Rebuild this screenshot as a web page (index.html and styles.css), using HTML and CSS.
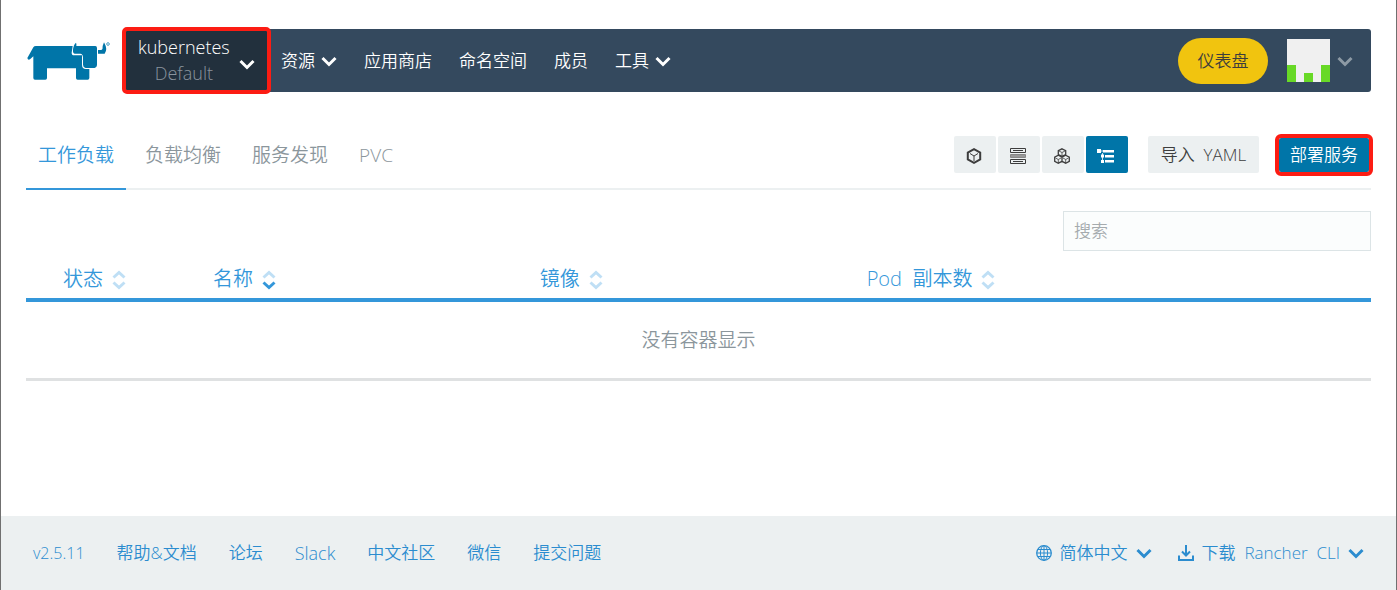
FILE: index.html
```html
<!DOCTYPE html>
<html lang="zh-CN">
<head>
<meta charset="utf-8">
<title>Rancher</title>
<link rel="stylesheet" href="styles.css">
</head>
<body>
<svg class="defs" aria-hidden="true">
  <symbol id="chevron" viewBox="0 0 16 16"><path d="M1.5 5 8 11.500 14.500 5" fill="none" stroke="currentColor" stroke-width="3"/></symbol>
  <symbol id="sort" viewBox="0 0 14 20"><path class="sort-up" d="M1.500 7.500 7 2.500 12.500 7.500"/><path class="sort-down" d="M1.500 12.500 7 17.500 12.500 12.500"/></symbol>
</svg>
<div class="page">
  <header class="header">
    <a class="logo" href="#" aria-label="Rancher">
      <svg viewBox="18 30 255 123">
        <path d="M22 84 40 52Q42 48 48 48H158L155 68Q155 76 162 76H186V104Q186 117 198 117H208V144Q208 149 203 149H173Q168 149 168 144V115H81V144Q81 149 76 149H45Q40 149 40 144V79L30 88Q24 92 22 84Z"/>
        <path d="M168 38Q170 42 169 48H226Q231 48 231 54V104Q231 114 218 114H197Q189 112 189 104V82Q188 71 181 71H165Q158 71 159 60Q160 45 168 38Z"/>
        <path d="M252 37Q264 58 254 71H234V60H244Q249 58 248 48Z"/>
        <circle cx="264" cy="42" r="4" fill="none" stroke="#0075a8" stroke-width="2"/>
      </svg>
    </a>
    <div class="bar">
      <button class="project" type="button">
        <span class="project-names"><span>kubernetes</span><span class="sub">Default</span></span>
        <svg class="icon"><use href="#chevron"/></svg>
      </button>
      <nav class="nav">
        <a href="#">资源<svg class="icon"><use href="#chevron"/></svg></a>
        <a href="#">应用商店</a>
        <a href="#">命名空间</a>
        <a href="#">成员</a>
        <a href="#">工具<svg class="icon"><use href="#chevron"/></svg></a>
      </nav>
      <button class="dashboard" type="button">仪表盘</button>
      <button class="user" type="button" aria-label="用户">
        <svg class="avatar" viewBox="0 0 43 43"><path fill="#f0f0f0" d="M0 0h43v43H0z"/><path fill="#68d926" d="M0 26h9v17H0zM17 34h9v9h-9zM34 26h9v17h-9z"/></svg>
        <svg class="icon"><use href="#chevron"/></svg>
      </button>
    </div>
  </header>

  <main class="main">
    <div class="toolbar">
      <nav class="tabs">
        <a class="active" href="#">工作负载</a>
        <a href="#">负载均衡</a>
        <a href="#">服务发现</a>
        <a href="#">PVC</a>
      </nav>
      <div class="actions">
        <div class="views">
          <button class="btn view" type="button" aria-label="容器"><svg class="icon" viewBox="0 0 16 16" fill="none" stroke="currentColor"><path stroke-width="2" d="M8 1.200 14.200 4.500V11.500L8 14.800 1.800 11.500V4.500Z"/><path d="M4 5.500 8 8 12 5.500M8 8V13"/></svg></button>
          <button class="btn view" type="button" aria-label="主机"><svg class="icon" viewBox="0 0 16 16" fill="none" stroke="currentColor"><path fill="#999" stroke="#888" d="M.5 6.500h15v3H.5z"/><path d="M.5.500h15v4H.5zM.5 11.500h15v4H.5zM3 2.500h10M3 13.500h10"/></svg></button>
          <button class="btn view" type="button" aria-label="分组"><svg class="icon" viewBox="0 0 16 16" fill="none" stroke="currentColor" stroke-width="1.300"><path d="M8 .8 11.700 2.700V6.600L8 8.400 4.300 6.600V2.700ZM4.300 7.200 8 9.200V13.300L4.300 15.200 .7 13.300V9.200ZM11.700 7.200 15.300 9.200V13.300L11.700 15.200 8 13.300V9.200Z"/><path stroke-width=".8" d="M5 3 8 4.500 11 3M8 4.500V8M1.500 10 4.300 11.500 7 10M4.300 11.500V15M9 10 11.700 11.500 14.500 10M11.700 11.500V15"/></svg></button>
          <button class="btn view on" type="button" aria-label="列表"><svg class="icon wide" viewBox="0 0 18 16" fill="currentColor"><path d="M0 1h4v4H0zM6 2h11v2.500H6zM4 6.500h3v3H4zM8 7h9v2.500H8zM4 12h3v3H4zM8 12h9v2.500H8z"/><path fill="none" stroke="currentColor" stroke-width=".8" d="M4 3H6M5.500 5V13"/></svg></button>
        </div>
        <button class="btn import" type="button">导入&nbsp; YAML</button>
        <button class="btn deploy" type="button">部署服务</button>
      </div>
    </div>

    <input class="search" type="search" placeholder="搜索" aria-label="搜索">

    <table class="grid">
      <colgroup><col class="col-state"><col class="col-name"><col class="col-image"><col></colgroup>
      <thead>
        <tr>
          <th>状态<svg class="sort"><use href="#sort"/></svg></th>
          <th>名称<svg class="sort desc"><use href="#sort"/></svg></th>
          <th>镜像<svg class="sort"><use href="#sort"/></svg></th>
          <th>Pod&nbsp; 副本数<svg class="sort"><use href="#sort"/></svg></th>
        </tr>
      </thead>
      <tbody><tr><td colspan="4">没有容器显示</td></tr></tbody>
    </table>
  </main>

  <footer class="footer">
    <nav class="links">
      <a class="version" href="#">v2.5.11</a>
      <a href="#">帮助&amp;文档</a>
      <a href="#">论坛</a>
      <a class="latin" href="#">Slack</a>
      <a href="#">中文社区</a>
      <a href="#">微信</a>
      <a href="#">提交问题</a>
    </nav>
    <div class="menus">
      <button type="button"><svg class="icon" viewBox="0 0 16 16" fill="none" stroke="currentColor"><circle cx="8" cy="8" r="7.300" stroke-width="1.300"/><ellipse cx="8" cy="8" rx="3.600" ry="7.300"/><path d="M8 1v14M1 8h14M2 4.500h12M2 11.500h12"/></svg>简体中文<svg class="icon"><use href="#chevron"/></svg></button>
      <button type="button"><svg class="icon" viewBox="0 0 16 16" fill="none" stroke="currentColor" stroke-width="2"><path d="M8 0v10M4 6.500 8 10.500 12 6.500M1 10.500V15H15V10.500"/></svg>下载&nbsp; Rancher&nbsp; CLI<svg class="icon"><use href="#chevron"/></svg></button>
    </div>
  </footer>
</div>
</body>
</html>
```
FILE: styles.css
```css
* { box-sizing: border-box; }
body {
  margin: 0;
  color: #3d3d3d;
  background: #fff;
  font: 350 17px/24px "Open Sans", "Noto Sans CJK SC", sans-serif;
}
a { color: inherit; text-decoration: none; }
button { font: inherit; color: inherit; border: 0; padding: 0; background: none; cursor: pointer; }
.defs { position: absolute; width: 0; height: 0; }
.icon { width: 16px; height: 16px; flex: none; }
.page {
  min-height: 100vh;
  display: flex;
  flex-direction: column;
  border: solid #707070;
  border-width: 0 1px;
}

.header { display: flex; padding: 29px 25px 0; }
.logo { width: 85px; padding-top: 11px; margin-right: 15px; }
.logo svg { display: block; width: 85px; height: 41px; fill: #0075a8; }
.bar {
  flex: 1;
  height: 63px;
  display: flex;
  align-items: center;
  color: #fff;
  background: #34495e;
  border-radius: 3px;
}
.project {
  width: 141px;
  height: 59px;
  display: flex;
  align-items: center;
  justify-content: space-between;
  padding: 0 12px;
  font-size: 18px;
  background: #22303d;
  outline: 4px solid #fc1c13;
  border-radius: 1px;
}
.project .icon { margin-top: 6px; }
.project-names { display: flex; flex-direction: column; align-items: center; line-height: 26px; padding-bottom: 2px; }
.project .sub { color: #8a949d; }
.nav { display: flex; gap: 27px; padding-left: 14px; margin-right: auto; }
.nav a { display: flex; align-items: center; gap: 6px; }
.dashboard {
  width: 90px;
  height: 46px;
  border-radius: 23px;
  color: #3d3d3d;
  background: #f1c40f;
}
.user { display: flex; align-items: center; gap: 7px; margin: 0 18px 0 19px; color: #8d9aa5; }
.avatar { width: 43px; height: 43px; }

.main { padding: 44px 25px 0; display: flex; flex-direction: column; }
.toolbar {
  display: flex;
  justify-content: space-between;
  border-bottom: 2px solid #ecf0f1;
}
.tabs { display: flex; gap: 7px; font-size: 19px; color: #8b969c; }
.tabs a { height: 54px; line-height: 38px; padding: 0 12px; margin-bottom: -2px; }
.tabs .active { color: #3497da; border-bottom: 2px solid #3497da; }
.actions { display: flex; height: 37px; }
.views { display: flex; gap: 2px; margin-right: 20px; }
.btn { background: #ecf0f1; border-radius: 2px; }
.view { width: 42px; display: flex; align-items: center; justify-content: center; padding: 2px 2px 0 0; }
.view .wide { width: 18px; }
.view.on { background: #0075a8; color: #fff; }
.import { width: 111px; margin-right: 20px; }
.deploy {
  width: 90px;
  height: 34px;
  margin: 2px 2px 0 0;
  color: #fff;
  background: #0075a8;
  outline: 4px solid #fc1c13;
}
.search {
  width: 308px;
  height: 40px;
  align-self: flex-end;
  margin-top: 21px;
  padding: 0 10px 2px;
  font: inherit;
  border: 1px solid #dce4e6;
  background: #fbfdfd;
}
.search::placeholder { color: #a5abae; }

.grid { width: 100%; margin-top: 8px; table-layout: fixed; border-collapse: collapse; }
.col-state { width: 187px; }
.col-name, .col-image { width: 24.3%; }
.grid th {
  height: 41px;
  padding: 0;
  font-size: 20px;
  font-weight: inherit;
  text-align: left;
  color: #3497da;
  border-bottom: 4px solid #3497da;
}
.grid th:first-child { padding-left: 37px; }
.grid td {
  height: 79px;
  padding: 0;
  font-size: 19px;
  text-align: center;
  color: #8b969c;
  border-bottom: 3px solid #dfe1e2;
}
.sort {
  width: 14px;
  height: 20px;
  margin-left: 9px;
  vertical-align: -4px;
  fill: none;
  stroke: #bfdff5;
  stroke-width: 3;
  --down: #bfdff5;
}
.sort.desc { --down: #3497da; }
.sort-down { stroke: var(--down); }

.footer {
  height: 74px;
  display: flex;
  align-items: center;
  justify-content: space-between;
  margin-top: auto;
  padding: 0 32px;
  color: #2b8ccf;
  background: #ecf0f1;
}
.links { display: flex; gap: 32px; }
.version { font-size: 16px; }
.latin { font-size: 18px; }
.menus { display: flex; gap: 26px; }
.menus button { display: flex; align-items: center; gap: 8px; }
```
